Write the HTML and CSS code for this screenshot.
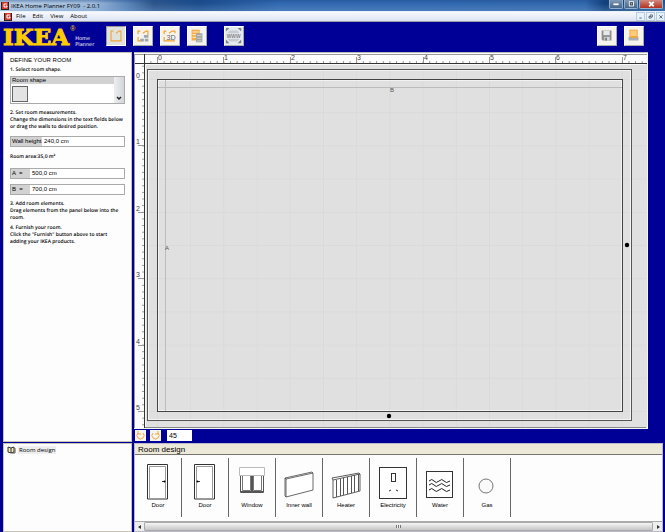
FILE: index.html
```html
<!DOCTYPE html>
<html lang="en">
<head>
<meta charset="utf-8">
<title>IKEA Home Planner FY09 - 2.0.1</title>
<link rel="stylesheet" href="styles.css">
</head>
<body>
<header class="titlebar">
  <svg class="app-icon" viewBox="0 0 8 8"><rect width="8" height="8" fill="#282424"/><rect x="1" width="6" height="7" fill="#d33b2c"/><path d="M6 2H3v3h3V4H5" fill="none" stroke="#fff"/></svg>
  <h1>IKEA Home Planner FY09 &nbsp;- 2.0.1</h1>
  <div class="window-buttons">
    <button aria-label="Minimize"><svg viewBox="0 0 14 9"><rect x="4" y="4" width="6" height="2" fill="#fff"/></svg></button>
    <button aria-label="Restore"><svg viewBox="0 0 14 9"><rect x="5" y="2" width="5" height="5" fill="#456" stroke="#fff"/><rect x="7" y="4" width="1" height="1" fill="#fff"/></svg></button>
    <button class="close" aria-label="Close"><svg viewBox="0 0 24 9"><path d="M10 2l5 5M15 2l-5 5" stroke="#fff" stroke-width="2"/></svg></button>
  </div>
</header>
<nav class="menubar">
  <svg class="app-icon" viewBox="0 0 8 8"><rect width="8" height="8" fill="#282424"/><rect x="1" width="6" height="7" fill="#d33b2c"/><path d="M6 2H3v3h3V4H5" fill="none" stroke="#fff"/></svg>
  <button>File</button><button>Edit</button><button>View</button><button>About</button>
  <div class="document-buttons">
    <button aria-label="Minimize document"><svg viewBox="0 0 9 9"><path d="M3 6.500h3" stroke="#345"/></svg></button>
    <button aria-label="Restore document"><svg viewBox="0 0 9 9"><path d="M4 4V2.500h3V5H6M2.500 4.500h3v2h-3z" fill="none" stroke="#456"/></svg></button>
    <button aria-label="Close document"><svg viewBox="0 0 9 9"><path d="M3 3l4 4M7 3L3 7" stroke="#345"/></svg></button>
  </div>
</nav>
<div class="toolbar">
  <div class="brand"><span class="logo">IKEA</span><sup>®</sup><span class="product">Home<br>Planner</span></div>
  <div class="tools">
    <button class="active" aria-label="Define room"><svg viewBox="0 0 20 20"><path d="M7 4.500H4.500v11h11v-11H14M10 7l4-3" fill="none" stroke="#f2a440" stroke-width="1.300"/></svg></button>
    <button aria-label="Furnish"><svg viewBox="0 0 20 20"><path d="M4.500 8V4.500H7M10 7l4-3M14 4.500h1.500V9M4.500 11v4.500H8" fill="none" stroke="#f4a12e" stroke-width="1.300"/><path d="M11 9h5v3h-5zM7 13h4v3H7zM12 13h4v3h-4z" fill="#a0a6aa"/></svg></button>
    <button aria-label="3D view"><svg viewBox="0 0 20 20"><path d="M3.500 8V4.500H6M9 7l4-3M13 4.500h2.500V7M3.500 11v4.500h12" fill="none" stroke="#f4a12e" stroke-width="1.300"/><text x="6" y="14">3D</text></svg></button>
    <button aria-label="Product list"><svg viewBox="0 0 20 20"><rect x="4" y="3" width="9" height="12" fill="#f6ad49"/><path d="M5 5.500h7M5 8.500h7M5 11.500h7" stroke="#fff2d5"/><path d="M9 7h7v10H9z" fill="#a1a5a5"/><path d="M10 9.500h5M10 12.500h5M10 15.500h5" stroke="#d6d6d6"/></svg></button>
    <button class="web" aria-label="Web site"><svg viewBox="0 0 20 20"><path d="M5 4h9l2 3H3zM3 13h13l-2 3H5z" fill="#c7cbd0"/><path d="M1 5V1h4zM14 1h4v4zM1 14v4h4zM18 14v4h-4z" fill="#7b8292"/><text class="www" x="2" y="12">www</text></svg></button>
  </div>
  <div class="tools file-tools">
    <button aria-label="Save"><svg viewBox="0 0 20 20"><path d="M4 4h11v11H5l-1-1z" fill="#8d9193"/><path d="M6 4h7v5H6z" fill="#e8e8e8"/><path d="M7 11h6v4H7z" fill="#d7d7d7"/><path d="M8 12h2v3H8z" fill="#777"/></svg></button>
    <button aria-label="Print"><svg viewBox="0 0 20 20"><rect x="5.500" y="3.500" width="8" height="8" fill="#ffcc7b" stroke="#f5a22e"/><path d="M4 11h11v4H4z" fill="#a9b0b5"/><path d="M6 10h8v2H6z" fill="#f0a53e"/></svg></button>
  </div>
</div>
<main class="workspace">
  <aside class="sidebar">
    <section class="panel define">
      <h2>DEFINE YOUR ROOM</h2>
      <p>1. Select room shape.</p>
      <div class="shape-list">
        <div class="shapes"><h3>Room shape</h3><button aria-label="Rectangular room"></button></div>
        <button class="scroll-down" aria-label="Scroll down"><svg viewBox="0 0 10 10"><path d="M3 4l2 2 2-2" fill="none" stroke="#222" stroke-width="1.500"/></svg></button>
      </div>
      <p>2. Set room measurements.<br>Change the dimensions in the text fields below<br>or drag the walls to desired position.</p>
      <div class="field"><label for="height">Wall height</label><input id="height" value="240,0 cm"></div>
      <p class="area">Room area:35,0 m²</p>
      <div class="field short"><label for="a">A &nbsp;=</label><input id="a" value="500,0 cm"></div>
      <div class="field short"><label for="b">B &nbsp;=</label><input id="b" value="700,0 cm"></div>
      <p class="step">3. Add room elements.<br>Drag elements from the panel below into the<br>room.</p>
      <p class="step">4. Furnish your room.<br>Click the "Furnish" button above to start<br>adding your IKEA products.</p>
    </section>
    <section class="panel tree">
      <svg viewBox="0 0 9 8"><path d="M1 1l3 1v5L1 6zM4 2l3-1v5L4 7" fill="#f5e8ba" stroke="#333"/><path d="M8 2v5H5" fill="none" stroke="#555"/></svg><span>Room design</span>
    </section>
  </aside>
  <div class="stage">
    <div class="plan">
      <svg viewBox="0 0 514 376" role="img" aria-label="Floor plan">
        <defs>
          <pattern id="grid" x="23" y="26" width="33.2" height="33.2" patternUnits="userSpaceOnUse"><path d="M.5 0v33.200M0 .5h33.200" stroke="#dadada"/></pattern>
          <pattern id="ticks-x" x="23" y="0" width="6.64" height="10" patternUnits="userSpaceOnUse"><path d="M.5 8v3" stroke="#999"/></pattern>
          <pattern id="ticks-y" x="0" y="26" width="10" height="6.64" patternUnits="userSpaceOnUse"><path d="M8 .5h3" stroke="#999"/></pattern>
        </defs>
        <rect width="514" height="376" fill="#e0e0e0"/>
        <rect x="11" y="11" width="501" height="363" fill="url(#grid)"/>
        <rect width="514" height="10" fill="#fdfdfd"/><rect width="10" height="376" fill="#fdfdfd"/>
        <rect x="12" width="500" height="10" fill="url(#ticks-x)"/><rect y="12" width="10" height="362" fill="url(#ticks-y)"/>
        <path d="M0 1.500h513M.5 1v374" stroke="#999"/>
        <path d="M1 10.500h512M10.500 1v374" stroke="#333"/>
        <path d="M11 11.500h501M11.500 11v363M0 375.500h514M513.500 0v376" stroke="#f7f7f7"/>
        <path d="M11 374.500h501" stroke="#888"/>
        <path d="M23.500 4v6M89.500 4v6M156.500 4v6M222.500 4v6M289.500 4v6M355.500 4v6M421.500 4v6M488.500 4v6M4 26.500h6M4 92.500h6M4 159.500h6M4 225.500h6M4 292.500h6M4 358.500h6" stroke="#999"/>
        <g class="ruler-text"><text x="24" y="7">0</text><text x="90" y="7">1</text><text x="157" y="7">2</text><text x="223" y="7">3</text><text x="290" y="7">4</text><text x="356" y="7">5</text><text x="422" y="7">6</text><text x="489" y="7">7</text><text x="2" y="25">0</text><text x="2" y="91">1</text><text x="2" y="158">2</text><text x="2" y="224">3</text><text x="2" y="291">4</text><text x="2" y="357">5</text></g>
        <rect x="14.500" y="17.500" width="482" height="349" fill="none" stroke="#f3f3f3"/>
        <rect x="24.500" y="27.500" width="463" height="330" fill="none" stroke="#f3f3f3"/>
        <path d="M24 34.500h464M31.500 27v331" stroke="#bcbcbc"/>
        <rect x="13.500" y="16.500" width="484" height="351" fill="none" stroke="#555"/>
        <rect x="23.500" y="26.500" width="465" height="332" fill="none" stroke="#444"/>
        <g class="wall-text"><text x="256" y="39">B</text><text x="31" y="197">A</text></g>
        <circle cx="493" cy="192" r="2.200"/><circle cx="255" cy="363" r="2.200"/>
      </svg>
    </div>
    <div class="rotation">
      <button aria-label="Rotate left"><svg viewBox="0 0 11 11"><path d="M3 3a3.500 3.500 0 1 0 5 0M3 1v3h3" fill="none" stroke="#f3a63d"/></svg></button>
      <button aria-label="Rotate right"><svg viewBox="0 0 11 11"><path d="M8 3a3.500 3.500 0 1 1-5 0M8 1v3H5" fill="none" stroke="#f3a63d"/></svg></button>
      <input aria-label="Rotation angle" value="45">
    </div>
    <section class="catalog">
      <h2>Room design</h2>
      <div class="items">
        <button><svg viewBox="0 0 46 44"><path d="M12.500 41V6.500h20V41z" fill="#fff" stroke="#333"/><path d="M14.500 40V8.500h16V40" fill="none" stroke="#999"/><path d="M27 23.500h3" stroke="#333"/><circle cx="29.500" cy="23.500" r="1"/></svg><span>Door</span></button>
        <button><svg viewBox="0 0 46 44"><path d="M12.500 41V6.500h20V41z" fill="#fff" stroke="#333"/><path d="M14.500 40V8.500h16V40" fill="none" stroke="#999"/><path d="M15 23.500h3" stroke="#333"/><circle cx="15.500" cy="23.500" r="1"/></svg><span>Door</span></button>
        <button><svg viewBox="0 0 46 44"><path d="M11.500 17v17.500h23V17" fill="#fff" stroke="#555"/><path d="M13.500 17v15.500h8V17M24.500 17v15.500h8V17" fill="none" stroke="#777"/><path d="M23 17v18" stroke="#555" stroke-width="2"/><path d="M12 33.500h22" stroke="#555"/><path d="M10.500 9.500h25v8h-25z" fill="#fff" stroke="#bbb"/></svg><span>Window</span></button>
        <button><svg viewBox="0 0 46 44"><path d="M10 21l27-6v17l-27 7zM10 21l-1-1v18l1 1M9 20l27-6 1 1" fill="#fff" stroke="#444" stroke-width=".8"/></svg><span>Inner wall</span></button>
        <button><svg viewBox="0 0 46 44"><path d="M10 22l27-6v17l-27 7zM10 22l-1-2 27-5 1 1" fill="#fff" stroke="#333" stroke-width=".8"/><path d="M13.500 22v17M17.500 21v17M20.500 20v17M24.500 19v17M28.500 18v17M31.500 17v17M35.500 16v17" stroke="#555"/></svg><span>Heater</span></button>
        <button><svg viewBox="0 0 46 44"><rect x="9.500" y="9.500" width="27" height="31" fill="#fff" stroke="#333"/><rect x="21.500" y="15.500" width="4" height="8" fill="#fff" stroke="#333"/><path d="M19 33l2-1M26 32l2 1" stroke="#333"/></svg><span>Electricity</span></button>
        <button><svg viewBox="0 0 46 44"><rect x="9.500" y="13.500" width="26" height="26" fill="#fff" stroke="#333"/><path d="M12 23q3-3 5 0t5 0 5 0 6 0M12 27q3-3 5 0t5 0 5 0 6 0M12 32q3-3 5 0t5 0 5 0 6 0" fill="none" stroke="#222"/></svg><span>Water</span></button>
        <button><svg viewBox="0 0 46 44"><circle cx="22" cy="28" r="7" fill="#fafafa" stroke="#777"/></svg><span>Gas</span></button>
      </div>
      <div class="scrollbar"><button aria-label="Scroll left"><svg viewBox="0 0 9 9"><path d="M6 3v4L3 5z" fill="#333"/></svg></button><div class="thumb"><i></i></div><button aria-label="Scroll right"><svg viewBox="0 0 9 9"><path d="M4 3v4l3-2z" fill="#333"/></svg></button></div>
    </section>
  </div>
</main>
</body>
</html>
```
FILE: styles.css
```css
* { box-sizing: border-box; }
body {
  margin: 0;
  min-height: 100vh;
  display: flex;
  flex-direction: column;
  background: #000096;
  color: #000;
  font: 6px/7px "Liberation Sans", Arial, sans-serif;
}
h1, h2, h3, p { margin: 0; font: inherit; }
button { margin: 0; padding: 0; border: 0; background: none; font: inherit; color: inherit; }
input { min-width: 0; margin: 0; border: 0; font: inherit; color: inherit; }
svg { display: block; }

.titlebar {
  display: flex;
  align-items: center;
  height: 11px;
  padding-left: 1px;
  background:
    linear-gradient(#19488a66, transparent 30%, #7aa4d455),
    linear-gradient(90deg, #b9cde4, #9db8d9 14%, #5d86b9 19%, #2d568b 23%, #1b4c8c 30%, #3168b0 42%, #3167ad 88%, #103e7a 91%, #205792);
}
.app-icon { width: 8px; height: 8px; flex: none; }
.titlebar h1 { margin-left: 2px; color: #000; font: 6px/10px "Open Sans", sans-serif; white-space: nowrap; }
.window-buttons { display: flex; gap: 1px; align-self: flex-start; margin-left: auto; padding-right: 2px; }
.window-buttons button {
  width: 14px;
  height: 9px;
  border: 1px solid #93afce;
  border-top: 0;
  border-radius: 0 0 2px 2px;
  background: linear-gradient(#8299b4, #456587);
}
.window-buttons .close { width: 24px; background: linear-gradient(#d08a80, #b52f20); }

.menubar {
  display: flex;
  align-items: center;
  gap: 7px;
  height: 11px;
  padding-left: 4px;
  border-top: 1px solid #e9f2fb;
  border-bottom: 1px solid #9c9ca5;
  background: linear-gradient(#f8f9fd, #dce3f2);
  font: 6px/9px "Open Sans", sans-serif;
}
.menubar .app-icon { margin-right: -3px; }
.document-buttons { display: flex; gap: 1px; margin-left: auto; }
.document-buttons button { width: 9px; height: 9px; border: 1px solid #b8cbe0; background: #e8f2fb; }

.toolbar { display: flex; align-items: center; height: 30px; padding: 0 21px 2px 3px; }
.brand { display: flex; width: 103px; height: 22px; color: #fc0; }
.logo { font: bold 23px/24px "DejaVu Serif", serif; -webkit-text-stroke: 1px #fc0; }
.brand sup { margin-left: 1px; font: 7px/8px "Liberation Sans", sans-serif; }
.product { align-self: flex-end; color: #fff; font: 5px/6px "DejaVu Sans", sans-serif; }
.tools { display: flex; gap: 7px; }
.tools button {
  width: 20px;
  height: 20px;
  border: 1px solid;
  border-color: #fff #aaa #aaa #fff;
  background: #f5f3ee;
}
.tools .active { border-color: #999 #fff #fff #999; background: #dfe3dc; }
.tools .web { margin-left: 10px; background: #e5eaf0; }
.tools text { font: 8px "Liberation Sans", sans-serif; fill: #666; }
.tools .www { font: 7px "Liberation Sans", sans-serif; }
.file-tools { margin-left: auto; }

.workspace { display: grid; grid-template-columns: 129px 1fr; gap: 2px; flex: 1; padding: 0 2px 0 3px; }
.sidebar { display: flex; flex-direction: column; gap: 1px; }
.panel { border: 1px solid #c6c3b4; background: #fdfdfd; }
.define { flex: 1; padding: 4px 6px; }
.define p {
  font: 600 5px/7px "Open Sans", sans-serif;
  text-rendering: geometricPrecision;
  white-space: nowrap;
}
.define h2 { margin-bottom: 3px; }
.shape-list { display: flex; height: 28px; margin: 2px 0 6px; border: 1px solid #aaa; background: #fff; }
.shapes { flex: 1; }
.shapes h3 { padding-left: 1px; background: #d2d2d2; }
.shapes button { display: block; width: 16px; height: 16px; margin: 2px 1px; border: 1px solid #666; background: #e3e3e3; }
.scroll-down { display: flex; align-items: flex-end; width: 10px; background: linear-gradient(90deg, #eee, #d3d5dc); }
.scroll-down svg { width: 10px; }
.field { display: flex; height: 11px; margin-top: 5px; border: 1px solid #aaa; background: #fff; line-height: 9px; }
.field label { width: 31px; padding-left: 1px; background: #d2d2d2; white-space: nowrap; }
.field input { flex: 1; padding: 0 2px; }
.field.short label { width: 19px; }
.area { margin: 7px 0; }
.area + .short { margin-top: 0; }
.step { margin-top: 3px; }
.short + .step { margin-top: 6px; }
.tree { display: flex; gap: 2px; height: 89px; padding: 2px 3px; }
.tree svg { width: 9px; height: 8px; }
.tree span { height: 8px; padding: 0 1px; background: #eee; font: 6px/8px "Open Sans", sans-serif; }

.stage { display: flex; flex-direction: column; min-width: 0; }
.plan { margin-right: 15px; border-top: 1px solid #b8b8c0; }
.plan svg { width: 100%; }
.ruler-text { font: 7px "Liberation Sans", sans-serif; fill: #444; }
.wall-text { font: 6px "Liberation Sans", sans-serif; fill: #555; }
.rotation { display: flex; gap: 4px; height: 14px; padding: 1px; }
.rotation button { width: 11px; height: 11px; background: #f6f4ee; }
.rotation input { width: 25px; height: 11px; margin-left: 2px; padding: 0 2px; background: #fff; font: 7px "Liberation Sans", sans-serif; }
.catalog { display: flex; flex: 1; flex-direction: column; border: 1px solid #b9b9c8; background: #fdfdfd; }
.catalog h2 { height: 11px; padding-left: 3px; border-bottom: 1px solid #77756e; background: #ece9d8; font: 8px/11px "Liberation Sans", sans-serif; }
.items { display: flex; flex: 1; padding: 3px 0 4px; }
.items button { display: flex; flex-direction: column; align-items: center; width: 47px; border-right: 1px solid #666; }
.items svg { width: 46px; height: 44px; }
.scrollbar { display: flex; height: 10px; border-top: 1px solid #aaa; background: #eee; }
.scrollbar button { width: 9px; }
.thumb { display: grid; flex: 1; place-items: center; border: 1px solid #aaa; border-radius: 1px; background: linear-gradient(#f5f5f5, #c5c5c7); }
.thumb i { width: 5px; height: 3px; background: repeating-linear-gradient(90deg, #777 0 1px, #eee 1px 2px); }
```
